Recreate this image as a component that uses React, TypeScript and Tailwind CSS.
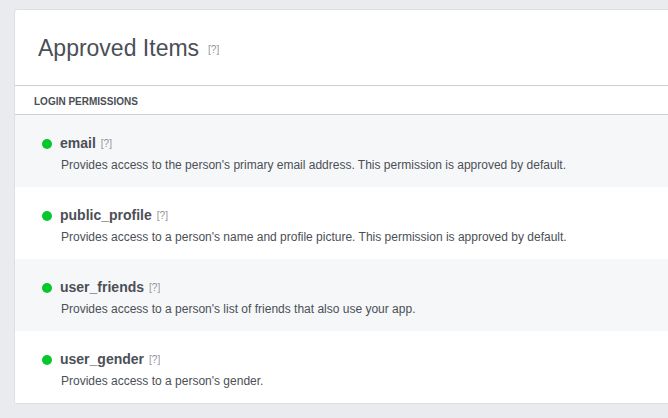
const items = [
  { name: "email", desc: "Provides access to the person's primary email address. This permission is approved by default." },
  { name: "public_profile", desc: "Provides access to a person's name and profile picture. This permission is approved by default." },
  { name: "user_friends", desc: "Provides access to a person's list of friends that also use your app." },
  { name: "user_gender", desc: "Provides access to a person's gender." },
];

function Help() {
  return <span className="ml-[5px] text-[10px] font-normal text-[#90949c]">[?]</span>;
}

export default function App() {
  return (
    <div
      className="h-[418px] w-[668px] overflow-hidden bg-[#e9ebee] pl-[14px] pt-[9px]"
      style={{ fontFamily: "'Liberation Sans', Helvetica, Arial, sans-serif" }}
    >
      <div className="w-[680px] overflow-hidden rounded-[3px] border border-[#dddfe2] bg-white">
        <div className="flex h-[76px] items-center border-b border-[#ccd0d5] pl-[23px]">
          <span className="mt-[1px] text-[23px] leading-[28px] text-[#4b4f56]">Approved Items</span>
          <span className="ml-[9px] mt-[3px] text-[10px] text-[#90949c]">[?]</span>
        </div>
        <div className="flex h-[29px] items-center border-b border-[#ccd0d5] pl-[19px] pt-[2px] text-[10px] font-bold uppercase text-[#4b4f56]">
          Login Permissions
        </div>
        {items.map((it, i) => (
          <div
            key={it.name}
            className={`h-[72px] pl-[27px] pt-[18px] ${i % 2 === 0 ? "bg-[#f6f7f9]" : "bg-white"}`}
          >
            <div className="flex h-[21px] items-center">
              <span className="mr-[8px] h-[10px] w-[10px] rounded-full bg-[#06c72d]" />
              <span className="text-[14px] leading-[21px] font-bold text-[#4b4f56]">{it.name}</span>
              <Help />
            </div>
            <div className="mt-[2px] pl-[19px] text-[12px] leading-[18px] text-[#4b4f56]">{it.desc}</div>
          </div>
        ))}
      </div>
    </div>
  );
}
